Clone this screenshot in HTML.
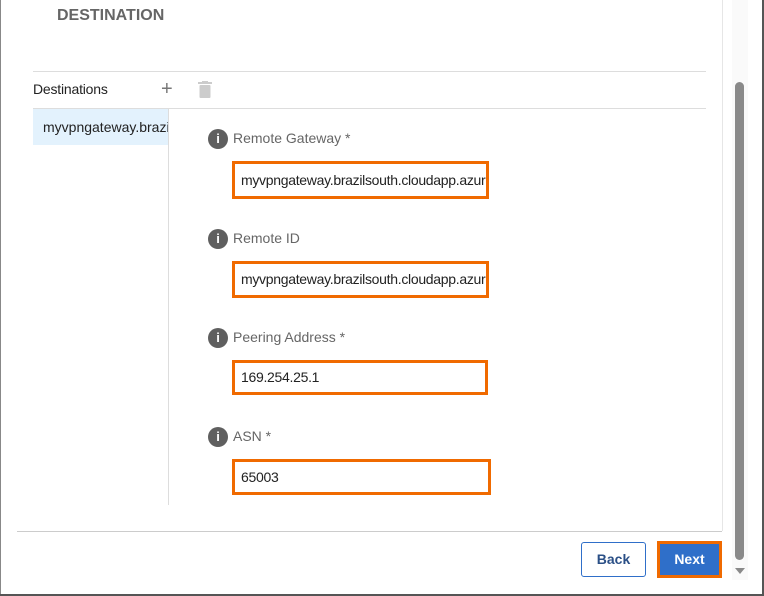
<!DOCTYPE html>
<html><head><style>
body{margin:0;width:764px;height:596px;background:#fff;font-family:"Liberation Sans",sans-serif;position:relative;overflow:hidden}
.a{position:absolute}
.lbl{font-size:14px;color:#666}
.ic{width:20px;height:20px;border-radius:50%;background:#5f5f5f;color:#fff;font-weight:bold;font-size:13px;text-align:center;line-height:20px}
.inp{border:3px solid #f06a00;box-sizing:border-box;font-size:14px;color:#222;padding-left:6px;white-space:nowrap;overflow:hidden;background:#fff;letter-spacing:-0.3px}
</style></head><body>
<div class="a" style="left:0;top:0;width:1px;height:596px;background:#888"></div>
<div class="a" style="left:762px;top:0;width:2px;height:596px;background:#555"></div>
<div class="a" style="left:0;top:594px;width:764px;height:2px;background:#555"></div>
<div class="a" style="left:722px;top:0;width:1px;height:531px;background:#e6e6e6"></div>
<div class="a" style="left:732px;top:0;width:16px;height:580px;background:#fafafa"></div>
<div class="a" style="left:735px;top:82px;width:9px;height:478px;background:#8a8a8a;border-radius:5px"></div>
<div class="a" style="left:735px;top:568px;width:0;height:0;border-left:5px solid transparent;border-right:5px solid transparent;border-top:6px solid #8a8a8a"></div>
<div class="a" style="left:57px;top:7px;font-size:16px;font-weight:bold;color:#666">DESTINATION</div>
<div class="a" style="left:33px;top:71px;width:673px;height:1px;background:#ddd"></div>
<div class="a" style="left:33px;top:81px;font-size:14px;color:#222;letter-spacing:-0.2px">Destinations</div>
<div class="a" style="left:161px;top:78px;font-size:20px;color:#777">+</div>
<svg class="a" style="left:198px;top:81px" width="14" height="17"><rect x="0" y="1" width="14" height="2" fill="#ccc"/><rect x="4" y="0" width="6" height="2" fill="#ccc"/><rect x="1.5" y="4" width="11" height="13" rx="1" fill="#ccc"/></svg>
<div class="a" style="left:33px;top:108px;width:673px;height:1px;background:#ddd"></div>
<div class="a" style="left:33px;top:109px;width:135px;height:36px;background:#e3f2fd;overflow:hidden"><div style="padding:10px 0 0 10px;font-size:14px;color:#222;white-space:nowrap">myvpngateway.brazilsouth</div></div>
<div class="a" style="left:168px;top:108px;width:1px;height:397px;background:#ddd"></div>

<div class="a ic" style="left:208px;top:129px">i</div><div class="a lbl" style="left:233px;top:130px">Remote Gateway *</div>
<div class="a inp" style="left:232px;top:161px;width:257px;height:38px;line-height:32px">myvpngateway.brazilsouth.cloudapp.azure.com</div>
<div class="a ic" style="left:208px;top:229px">i</div><div class="a lbl" style="left:233px;top:230px">Remote ID</div>
<div class="a inp" style="left:232px;top:261px;width:257px;height:37px;line-height:31px">myvpngateway.brazilsouth.cloudapp.azure.com</div>
<div class="a ic" style="left:208px;top:328px">i</div><div class="a lbl" style="left:233px;top:329px">Peering Address *</div>
<div class="a inp" style="left:232px;top:360px;width:256px;height:35px;line-height:29px">169.254.25.1</div>
<div class="a ic" style="left:208px;top:427px">i</div><div class="a lbl" style="left:233px;top:428px">ASN *</div>
<div class="a inp" style="left:232px;top:459px;width:259px;height:36px;line-height:30px">65003</div>

<div class="a" style="left:17px;top:531px;width:705px;height:1px;background:#ccc"></div>
<div class="a" style="left:581px;top:542px;width:65px;height:35px;box-sizing:border-box;border:1px solid #2f6fc9;border-radius:3px;text-align:center;line-height:33px;font-size:14px;font-weight:bold;color:#2a4f86">Back</div>
<div class="a" style="left:657px;top:541px;width:65px;height:37px;box-sizing:border-box;border:3px solid #f06a00;background:#2f6fc9;text-align:center;line-height:31px;font-size:14px;font-weight:bold;color:#fff">Next</div>
</body></html>
